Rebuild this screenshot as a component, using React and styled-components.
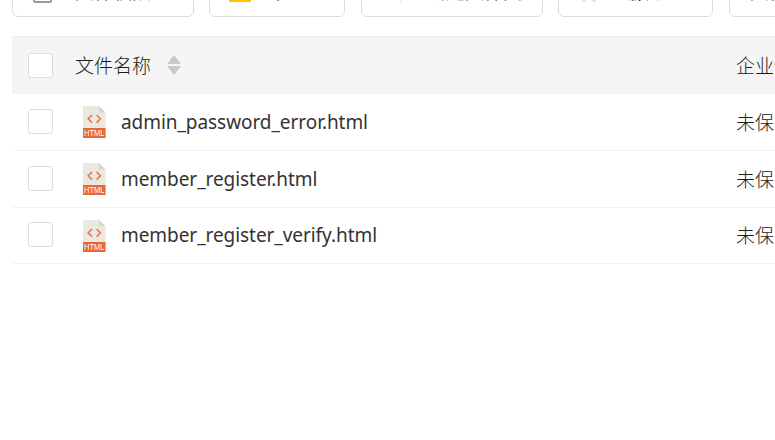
import React from 'react';
import styled, { createGlobalStyle } from 'styled-components';

const GlobalStyle = createGlobalStyle`
	body {
		margin: 0;
		overflow: hidden;
		background: #fff;
		color: #333;
		font-family: "Noto Sans", "Noto Sans CJK SC", sans-serif;
		font-size: 19px;
	}
`;

const Page = styled.div`
	width: 775px;
	height: 440px;
	overflow: hidden;
	padding-left: 12px;
	box-sizing: border-box;
`;

const Toolbar = styled.div`
	display: flex;
	align-items: flex-end;
	height: 17px;
	margin-bottom: 19px;
	overflow: hidden;
`;

const ToolButton = styled.button`
	display: flex;
	flex: none;
	align-items: center;
	box-sizing: border-box;
	width: ${props => props.$width}px;
	height: 53px;
	margin: 0 ${props => props.$gap}px 0 0;
	padding: 0 0 0 ${props => props.$pad}px;
	border: 1px solid #d9dbe6;
	border-radius: 6px;
	background: #fff;
	color: #333;
	font-family: "Noto Sans CJK SC", sans-serif;
	font-weight: 350;
	font-size: 19px;
	line-height: 26px;
	white-space: nowrap;

	svg {
		flex: none;
		margin-top: 7px;
		margin-right: ${props => props.$space}px;
	}
`;

const Table = styled.div`
	width: 900px;
`;

const Row = styled.div`
	display: flex;
	align-items: center;
	box-sizing: border-box;
	height: ${props => props.$height}px;
	padding-left: 16px;
	border-bottom: 1px solid #f3f3f4;
`;

const HeaderRow = styled(Row)`
	border-top: 1px solid #ebebeb;
	border-bottom: none;
	background: #f5f5f5;
`;

const Checkbox = styled.span`
	flex: none;
	box-sizing: border-box;
	width: 25px;
	height: 25px;
	margin-bottom: ${props => props.$lift || 0}px;
	border: 1px solid #dcdde7;
	border-radius: 3px;
	background: #fff;
`;

const NameCell = styled.div`
	display: flex;
	align-items: center;
	width: ${props => props.$header ? 661 : 653}px;
	margin-left: ${props => props.$header ? 22 : 30}px;
	padding-bottom: ${props => props.$header ? 2 : 0}px;
	line-height: 28px;

	svg {
		flex: none;
	}
`;

const FileName = styled.span`
	margin-left: 14px;
	margin-bottom: ${props => props.$lift}px;
	letter-spacing: -0.06px;
	white-space: nowrap;
`;

const CnText = styled.span`
	margin-bottom: ${props => props.$lift || 0}px;
	color: #1c1c1c;
	font-family: "Noto Sans CJK SC", sans-serif;
	font-weight: 300;
	line-height: 28px;
	white-space: nowrap;
`;

const SortArrows = styled.span`
	display: flex;
	flex-direction: column;
	gap: 2px;
	margin-left: 16px;

	&::before,
	&::after {
		content: '';
		border: 7px solid transparent;
	}

	&::before {
		border-top: none;
		border-bottom: 9px solid #c9c9c9;
	}

	&::after {
		border-bottom: none;
		border-top: 9px solid #c9c9c9;
	}
`;

const HtmlIcon = () => (
	<svg width="24" height="32" viewBox="0 0 24 32">
		<path d="M0 0H16L22.6 6.6V23H0Z" fill="#e9e9e0" />
		<path d="M16 0V6.6H22.6Z" fill="#d6d6ca" />
		<path d="M9 9L5.2 12.8L9 16.6M13.6 9L17.4 12.8L13.6 16.6" fill="none" stroke="#ee7044" strokeWidth="1.5" />
		<path d="M0 22H22.6V32H0Z" fill="#ec6630" />
		<text transform="translate(11.3 30) scale(0.92 1)" fill="#fff" fontSize="8.2" fontFamily="Liberation Sans, sans-serif" textAnchor="middle">HTML</text>
	</svg>
);

const icons = {
	file: <svg width="20" height="20"><rect x="1" y="1" width="17" height="17" rx="1" fill="#fff" stroke="#999" strokeWidth="2" /></svg>,
	folder: <svg width="22" height="16"><path d="M0 0H9L11 3H22V16H0Z" fill="#ffc400" /></svg>,
	copy: <svg width="20" height="20"><path d="M13 19L16 13" stroke="#ddd" fill="none" /></svg>,
	cut: <svg width="20" height="15"><circle cx="5" cy="13" r="2" fill="#f5dcc4" /><circle cx="15" cy="13" r="2" fill="#f5dcc4" /></svg>
};

const tools = [
	{ label: '文件权限', icon: 'file', width: 182, gap: 15, pad: 20, space: 22 },
	{ label: '下一', icon: 'folder', width: 136, gap: 16, pad: 19, space: 18 },
	{ label: '新建文件夹', icon: 'copy', width: 182, gap: 15, pad: 25, space: 20 },
	{ label: '编辑', icon: 'cut', width: 155, gap: 16, pad: 20, space: 24 },
	{ label: '文件', icon: null, width: 182, gap: 0, pad: 20, space: 20 }
];

const files = [
	{ name: 'admin_password_error.html', height: 57, lift: 0 },
	{ name: 'member_register.html', height: 57, lift: 0 },
	{ name: 'member_register_verify.html', height: 56, lift: 2 }
];

const App = () => (
	<Page>
		<GlobalStyle />
		<Toolbar>
			{tools.map((tool, index) => (
				<ToolButton key={index} $width={tool.width} $gap={tool.gap} $pad={tool.pad} $space={tool.space}>
					{icons[tool.icon]}
					{tool.label}
				</ToolButton>
			))}
		</Toolbar>
		<Table>
			<HeaderRow $height={58}>
				<Checkbox />
				<NameCell $header>
					<CnText>文件名称</CnText>
					<SortArrows />
				</NameCell>
				<CnText $lift={2}>企业保护</CnText>
			</HeaderRow>
			{files.map(file => (
				<Row key={file.name} $height={file.height}>
					<Checkbox $lift={2} />
					<NameCell>
						<HtmlIcon />
						<FileName $lift={file.lift}>{file.name}</FileName>
					</NameCell>
					<CnText $lift={file.lift}>未保护</CnText>
				</Row>
			))}
		</Table>
	</Page>
);

export default App;
